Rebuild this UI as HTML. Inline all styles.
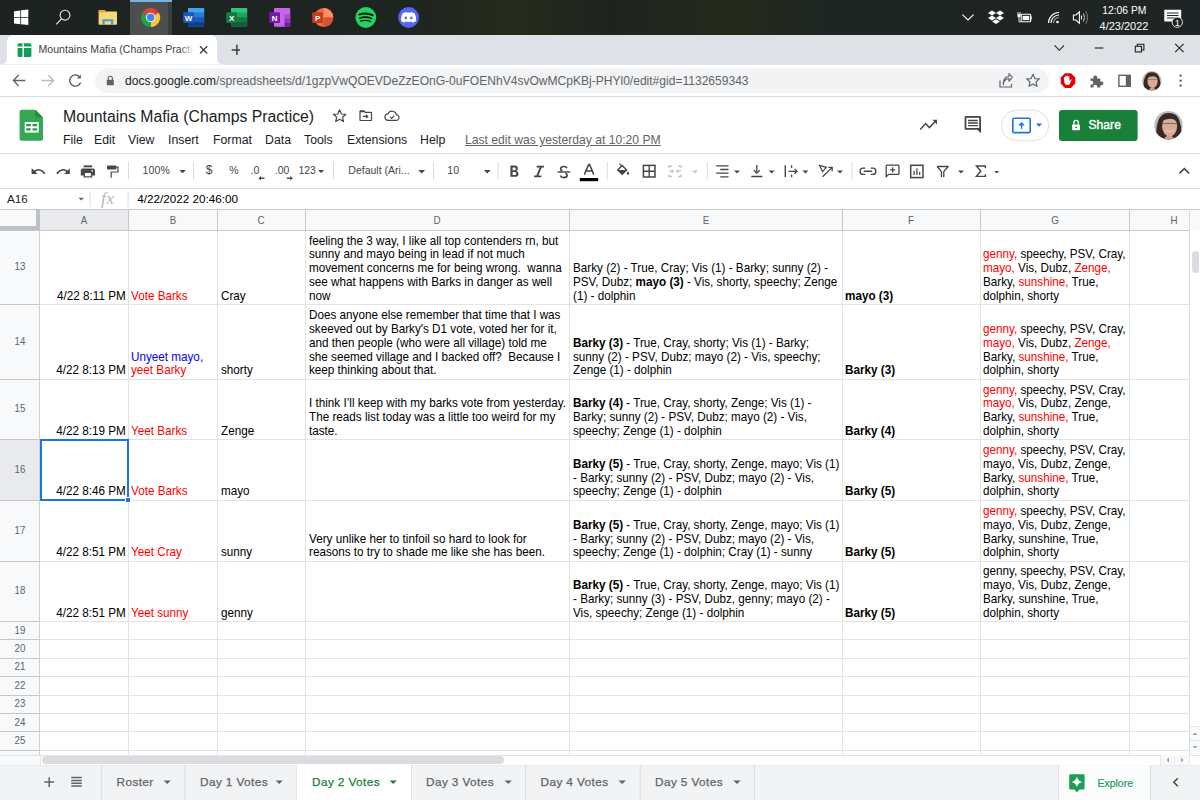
<!DOCTYPE html>
<html><head><meta charset="utf-8">
<style>
*{margin:0;padding:0;box-sizing:border-box}
html,body{width:1200px;height:800px;overflow:hidden;background:#fff;font-family:"Liberation Sans",sans-serif;position:relative}
.a{position:absolute}
.tb{left:0;top:0;width:1200px;height:35px;background:linear-gradient(90deg,#1d2321 0%,#1e2420 33%,#252b1c 43%,#1f231f 51%,#232a1c 61%,#1f2522 69%,#1f2524 100%)}
.tabstrip{left:0;top:35px;width:1200px;height:29.6px;background:#dee1e6}
.addr{left:0;top:64.6px;width:1200px;height:32px;background:#fff}
.omni{background:#f1f3f4}
.line{background:#dadce0}
.t{white-space:nowrap}
.cell{font-size:12.4px;line-height:13.75px;color:#000;white-space:nowrap;transform:scaleX(0.9435);transform-origin:0 50%}
.hdr{background:#f8f9fa}
.gl{background:#e2e3e3}
.hl{background:#c6c6c6}
.rn{font-size:10.8px;line-height:12px;color:#5f6368;text-align:center;width:40px;transform:scaleX(0.9)}
.ch{font-size:10.6px;line-height:12px;color:#5f6368;text-align:center;transform:scaleX(0.92)}
.red{color:#ff0000}
.blue{color:#0000ff}
.tabt{top:776.2px;font-size:11.8px;line-height:13px;color:#5f6368;letter-spacing:0.4px;-webkit-text-stroke:0.25px currentColor}
b{font-weight:bold}
</style></head><body>
<!-- Taskbar -->
<div class="a tb"></div>
<div class="a" style="left:130px;top:0;width:41.5px;height:35px;background:#4b504e"></div>
<div class="a" style="left:168px;top:0;width:3.5px;height:35px;background:#3a3f3d"></div>
<div class="a" style="left:130px;top:0;width:41.5px;height:2px;background:#76b4e3"></div>
<svg class="a" style="left:0;top:0" width="430" height="35" viewBox="0 0 430 35">
  <!-- windows -->
  <g fill="#fff">
    <path d="M14 11.2 L20.3 10.4 V16.9 H14 Z"/>
    <path d="M21.1 10.3 L28.3 9.4 V16.9 H21.1 Z"/>
    <path d="M14 17.7 H20.3 V24.2 L14 23.4 Z"/>
    <path d="M21.1 17.7 H28.3 V25.1 L21.1 24.3 Z"/>
  </g>
  <!-- search -->
  <circle cx="65" cy="15.2" r="4.9" fill="none" stroke="#e8e8e8" stroke-width="1.1"/>
  <path d="M61.5 18.8 L56.3 24.3" stroke="#e8e8e8" stroke-width="1.2"/>
  <!-- folder -->
  <path d="M98.6 11 Q98.6 10 99.6 10 H104.5 L106 11.4 H116.2 Q117 11.4 117 12.2 V24 Q117 24.8 116.2 24.8 H99.4 Q98.6 24.8 98.6 24 Z" fill="#f8d775"/>
  <path d="M98.6 11 Q98.6 10 99.6 10 H104.5 L106 11.4 H106 V12.6 H98.6 Z" fill="#e6a92a"/>
  <path d="M102.4 24.8 V19.2 H113.2 V24.8 H111 V21.3 H104.6 V24.8 Z" fill="#3c9eea"/>
  <!-- chrome -->
  <path d="M150.6 17.4 L142.37 12.65 A9.5 9.5 0 0 1 158.83 12.65 Z" fill="#db4437"/>
  <path d="M150.6 17.4 L158.83 12.65 A9.5 9.5 0 0 1 150.6 26.9 Z" fill="#fcc934"/>
  <path d="M150.6 17.4 L150.6 26.9 A9.5 9.5 0 0 1 142.37 12.65 Z" fill="#1ea446"/>
  <circle cx="150.6" cy="17.4" r="4.7" fill="#fff"/>
  <circle cx="150.6" cy="17.4" r="3.8" fill="#4285f4"/>
  <!-- word -->
  <rect x="188" y="8" width="16.2" height="18.6" rx="1" fill="#2b7cd3"/>
  <rect x="188" y="8" width="16.2" height="4.6" rx="1" fill="#41a5ee"/>
  <rect x="188" y="17.3" width="16.2" height="4.6" fill="#185abd"/>
  <rect x="188" y="21.9" width="16.2" height="4.7" rx="1" fill="#103f91"/>
  <rect x="183.2" y="12.3" width="10.8" height="10.6" rx="1" fill="#185abd"/>
  <text x="188.6" y="20.6" font-family="Liberation Sans" font-weight="bold" font-size="8" fill="#fff" text-anchor="middle">W</text>
  <!-- excel -->
  <rect x="231" y="8" width="16.2" height="18.6" rx="1" fill="#21a366"/>
  <rect x="231" y="8" width="16.2" height="4.6" rx="1" fill="#33c481"/>
  <rect x="231" y="17.3" width="16.2" height="4.6" fill="#107c41"/>
  <rect x="231" y="21.9" width="16.2" height="4.7" rx="1" fill="#185c37"/>
  <rect x="226.2" y="12.3" width="10.8" height="10.6" rx="1" fill="#107c41"/>
  <text x="231.6" y="20.6" font-family="Liberation Sans" font-weight="bold" font-size="8" fill="#fff" text-anchor="middle">X</text>
  <!-- onenote -->
  <rect x="274" y="8" width="16.2" height="18.8" rx="1" fill="#ca64ea"/>
  <rect x="284.5" y="14" width="5.7" height="4.3" fill="#ae4bd5"/>
  <rect x="284.5" y="18.3" width="5.7" height="4.3" fill="#9332bf"/>
  <rect x="284.5" y="22.6" width="5.7" height="4.2" fill="#7719aa"/>
  <rect x="269.2" y="12.3" width="10.8" height="10.6" rx="1" fill="#7719aa"/>
  <text x="274.6" y="20.6" font-family="Liberation Sans" font-weight="bold" font-size="8" fill="#fff" text-anchor="middle">N</text>
  <!-- powerpoint -->
  <circle cx="323.7" cy="17.5" r="9.6" fill="#ed6c47"/>
  <path d="M323.7 7.9 A9.6 9.6 0 0 1 333.3 17.5 H323.7 Z" fill="#ff8f6b"/>
  <path d="M333.3 17.5 A9.6 9.6 0 0 1 323.7 27.1 V17.5 Z" fill="#d35230"/>
  <rect x="312.2" y="12.3" width="10.8" height="10.6" rx="1" fill="#c43e1c"/>
  <text x="317.6" y="20.6" font-family="Liberation Sans" font-weight="bold" font-size="8" fill="#fff" text-anchor="middle">P</text>
  <!-- spotify -->
  <circle cx="365.8" cy="17.5" r="10.4" fill="#1ed760"/>
  <path d="M359.2 14.6 Q366 12.2 372.6 15.2" stroke="#111" stroke-width="1.9" fill="none" stroke-linecap="round"/>
  <path d="M359.9 17.9 Q366 16 371.6 18.5" stroke="#111" stroke-width="1.6" fill="none" stroke-linecap="round"/>
  <path d="M360.6 21 Q365.8 19.6 370.6 21.6" stroke="#111" stroke-width="1.3" fill="none" stroke-linecap="round"/>
  <!-- discord -->
  <circle cx="408.6" cy="17.5" r="10.4" fill="#5865f2"/>
  <path d="M402.6 13.2 Q405 12 406.4 11.9 L406.8 12.7 Q408.6 12.4 410.4 12.7 L410.8 11.9 Q412.2 12 414.6 13.2 Q416.4 16.6 416.1 21 Q414.4 22.3 412.6 22.8 L411.8 21.6 Q412.6 21.3 413.2 20.9 Q408.6 23 404 20.9 Q404.6 21.3 405.4 21.6 L404.6 22.8 Q402.8 22.3 401.1 21 Q400.8 16.6 402.6 13.2 Z" fill="#fff"/>
  <ellipse cx="405.8" cy="18" rx="1.25" ry="1.4" fill="#5865f2"/>
  <ellipse cx="411.4" cy="18" rx="1.25" ry="1.4" fill="#5865f2"/>
</svg>
<svg class="a" style="left:950px;top:0" width="250" height="35" viewBox="950 0 250 35">
  <path d="M962.4 14.6 L968 20 L973.6 14.6" stroke="#fff" stroke-width="1.1" fill="none"/>
  <!-- dropbox -->
  <g fill="#fff">
    <path d="M992 10.5 L996 13 L992 15.5 L988 13 Z"/>
    <path d="M1000 10.5 L1004 13 L1000 15.5 L996 13 Z"/>
    <path d="M992 15.5 L996 18 L992 20.5 L988 18 Z"/>
    <path d="M1000 15.5 L1004 18 L1000 20.5 L996 18 Z"/>
    <path d="M996 19.2 L999.8 21.6 L996 24 L992.2 21.6 Z"/>
  </g>
  <!-- battery plug -->
  <rect x="1021.2" y="14.2" width="9.4" height="7.6" rx="0.8" fill="none" stroke="#fff" stroke-width="1.1"/>
  <rect x="1030.6" y="16.3" width="1" height="3.4" fill="#fff"/>
  <rect x="1022.6" y="15.9" width="6.6" height="4.2" fill="#fff"/>
  <path d="M1017.9 12 V14 M1020.1 12 V14" stroke="#fff" stroke-width="0.9"/>
  <path d="M1017.4 14 H1020.6 V16 A1.6 1.6 0 0 1 1017.4 16 Z" fill="#fff"/>
  <path d="M1019 17.5 V21.8 H1021.2" stroke="#fff" stroke-width="0.9" fill="none"/>
  <!-- wifi -->
  <g fill="none" stroke="#fff" stroke-width="1.1">
    <path d="M1048.5 23 A10.5 10.5 0 0 1 1059 12.5"/>
    <path d="M1051 23 A8 8 0 0 1 1059 15"/>
    <path d="M1053.5 23 A5.5 5.5 0 0 1 1059 17.5" stroke="#aaa"/>
  </g>
  <circle cx="1057.5" cy="22" r="1.3" fill="#fff"/>
  <!-- volume -->
  <path d="M1073.4 15 H1076 L1079.4 11.8 V23.2 L1076 20 H1073.4 Z" fill="none" stroke="#fff" stroke-width="1.1"/>
  <path d="M1081.2 15.6 Q1082.4 17.5 1081.2 19.4" fill="none" stroke="#fff" stroke-width="1.1"/>
  <path d="M1083.4 13.4 Q1085.6 17.5 1083.4 21.6" fill="none" stroke="#ccc" stroke-width="1"/>
  <path d="M1085.8 11.2 Q1089 17.5 1085.8 23.8" fill="none" stroke="#888" stroke-width="1"/>
  <text x="1124.3" y="14" font-family="Liberation Sans" font-size="10.3" fill="#fff" text-anchor="middle">12:06 PM</text>
  <text x="1124" y="30" font-family="Liberation Sans" font-size="11" fill="#fff" text-anchor="middle">4/23/2022</text>
  <!-- notification -->
  <path d="M1164.3 9.8 H1181.2 V21.5 H1176 L1172.8 25 V21.5 H1164.3 Z" fill="#fff"/>
  <path d="M1167 13 H1178.5 M1167 15.5 H1178.5 M1167 18 H1176" stroke="#1f2621" stroke-width="1"/>
  <circle cx="1177.3" cy="22.2" r="5.2" fill="#1f2621" stroke="#ddd" stroke-width="1"/>
  <text x="1177.4" y="25.8" font-family="Liberation Sans" font-size="8.5" fill="#fff" text-anchor="middle">1</text>
</svg>

<!-- Tab strip -->
<div class="a tabstrip"></div>
<svg class="a" style="left:0;top:35px" width="240" height="30" viewBox="0 35 240 30">
  <path d="M0 64.6 Q7 64.6 7 57.6 V43 Q7 35 15 35 H209 Q217 35 217 43 V57.6 Q217 64.6 224 64.6 Z" fill="#fff"/>
  <!-- favicon -->
  <rect x="17.6" y="43.2" width="13.8" height="13.8" rx="1.5" fill="#0f9d58"/>
  <path d="M17.6 47.3 H31.4 M23.2 43.2 V57" stroke="#fff" stroke-width="1.5"/>
  <path d="M203 45.3 L210.2 52.5 M210.2 45.3 L203 52.5" stroke="#3c4043" stroke-width="1.3" transform="translate(-3,1)"/>
  <path d="M236.9 44.8 V55 M231.7 50 H242.1" stroke="#3c4043" stroke-width="1.5"/>
</svg>
<div class="a t" style="left:38.5px;top:42.5px;width:155px;overflow:hidden;font-size:10.5px;color:#3c4043;line-height:13px;letter-spacing:0.05px">Mountains Mafia (Champs Practice)</div>
<div class="a" style="left:181px;top:40px;width:14px;height:18px;background:linear-gradient(90deg,rgba(255,255,255,0),#fff 90%)"></div>
<svg class="a" style="left:1040px;top:35px" width="160" height="30" viewBox="1040 35 160 30">
  <path d="M1054.6 45.4 L1059.3 50.3 L1064 45.4" stroke="#202124" stroke-width="1.1" fill="none"/>
  <path d="M1094.8 48 H1103.4" stroke="#202124" stroke-width="1.1"/>
  <rect x="1135.3" y="46.3" width="6.2" height="5.6" fill="none" stroke="#202124" stroke-width="1.1"/>
  <path d="M1137.3 46.3 V44.2 H1143.9 V50 H1141.5" fill="none" stroke="#202124" stroke-width="1.1"/>
  <path d="M1175.2 43.8 L1183.6 52.2 M1183.6 43.8 L1175.2 52.2" stroke="#202124" stroke-width="1.1"/>
</svg>
<!-- Address bar -->
<div class="a addr"></div>
<div class="a omni" style="left:95px;top:68px;width:954px;height:24.7px;border-radius:12.4px"></div>
<svg class="a" style="left:0;top:64px" width="1200" height="32" viewBox="0 64 1200 32">
  <path d="M13.4 80.5 H25.3 M18.7 75 L13.4 80.5 L18.7 86" stroke="#5f6368" stroke-width="1.3" fill="none"/>
  <path d="M41.5 80.5 H53.6 M48.3 75 L53.6 80.5 L48.3 86" stroke="#b8babd" stroke-width="1.3" fill="none"/>
  <path d="M79.9 77.3 A5.6 5.6 0 1 0 80.6 82.4" stroke="#5f6368" stroke-width="1.4" fill="none"/>
  <path d="M80.9 74.6 V78.6 H76.9 Z" fill="#5f6368"/>
  <!-- lock -->
  <rect x="106.8" y="79.8" width="7" height="5.5" rx="0.6" fill="#5f6368"/>
  <path d="M108.2 80 V78.3 A2.1 2.1 0 0 1 112.4 78.3 V80" stroke="#5f6368" stroke-width="1.1" fill="none"/>
  <!-- share -->
  <path d="M1000 80.5 V87 H1011.5 V84" stroke="#5f6368" stroke-width="1.2" fill="none"/>
  <path d="M1003.2 84.6 Q1004 78.6 1009 78.6 V81.3 L1012.3 77.3 L1009 73.5 V76.2 Q1003.3 76.6 1003.2 84.6 Z" stroke="#5f6368" stroke-width="1.1" fill="none" stroke-linejoin="round"/>
  <!-- star -->
  <path d="M1033 74.3 L1034.9 78.6 L1039.4 78.9 L1036 81.9 L1037 86.3 L1033 83.9 L1029 86.3 L1030 81.9 L1026.6 78.9 L1031.1 78.6 Z" stroke="#5f6368" stroke-width="1.2" fill="none" stroke-linejoin="round"/>
  <!-- red hand -->
  <path d="M1065 73.3 H1071 L1075.3 77.6 V83.6 L1071 87.9 H1065 L1060.7 83.6 V77.6 Z" fill="#e60000"/>
  <path d="M1065.2 84.6 Q1064 82 1064 80.2 V77.3 Q1064.5 76.4 1065.2 77.3 V80 V76.3 Q1065.9 75.5 1066.6 76.3 V79.6 V75.9 Q1067.3 75.1 1068 75.9 V79.6 V76.6 Q1068.7 75.9 1069.4 76.6 V81 L1070.6 79.4 Q1071.6 79 1071.6 79.8 L1070 83.6 Q1069.4 84.9 1068.2 84.9 Z" fill="#fff"/>
  <!-- puzzle -->
  <path d="M1090.5 78.5 H1093.4 V77.3 A1.9 1.9 0 1 1 1097.2 77.3 V78.5 H1100.3 V81.4 H1101.5 A1.9 1.9 0 1 1 1101.5 85.2 H1100.3 V87.6 H1097.2 V86.6 A1.9 1.9 0 1 0 1093.4 86.6 V87.6 H1090.5 V84.6 H1091.4 A1.9 1.9 0 1 0 1091.4 80.8 H1090.5 Z" fill="#5f6368"/>
  <!-- sidebar -->
  <rect x="1118.9" y="75.3" width="11.4" height="11" fill="none" stroke="#5f6368" stroke-width="1.4"/>
  <rect x="1125.8" y="75.3" width="4.5" height="11" fill="#5f6368"/>
  <!-- kebab -->
  <circle cx="1180.6" cy="75.6" r="1.2" fill="#5f6368"/>
  <circle cx="1180.6" cy="80.6" r="1.2" fill="#5f6368"/>
  <circle cx="1180.6" cy="85.6" r="1.2" fill="#5f6368"/>
</svg>
<!-- avatar small -->
<svg class="a" style="left:1142.3px;top:71px" width="19.6" height="19.6" viewBox="0 0 28.6 28.6">
  <defs><clipPath id="avc2"><circle cx="14.3" cy="14.3" r="14.2"/></clipPath></defs>
  <g clip-path="url(#avc2)">
    <rect x="0" y="0" width="29" height="29" fill="#b4bfca"/>
    <path d="M3 29 Q1 18 4 10 Q7 2 14 2 Q22 1.5 25 9 Q28 17 27 29 Z" fill="#3b281e"/>
    <ellipse cx="15.4" cy="15" rx="7.4" ry="10" fill="#d8ab98"/>
    <path d="M8 9.5 Q11 4 16.5 4.6 Q21.5 5.6 22.6 11 Q20 7.4 15.5 7.6 Q11 8 8 9.5 Z" fill="#3b281e"/>
    <path d="M8.4 12.4 H22.4" stroke="#7a6a62" stroke-width="1"/>
    <path d="M10 29 Q11 24 15 24.5 Q19 24 20 29 Z" fill="#caa28c"/>
  </g>
</svg>
<div class="a t" style="left:125px;top:73.5px;font-size:12.05px;line-height:14px;color:#5f6368"><span style="color:#202124">docs.google.com</span>/spreadsheets/d/1gzpVwQOEVDeZzEOnG-0uFOENhV4svOwMCpKBj-PHYl0/edit#gid=1132659343</div>
<div class="a line" style="left:0;top:96px;width:1200px;height:1px"></div>

<!-- Sheets header -->
<svg class="a" style="left:0;top:97px" width="1200" height="57" viewBox="0 97 1200 57">
  <!-- logo -->
  <path d="M21.8 109.8 H35.3 L43 117.5 V138.6 Q43 140.8 40.8 140.8 H21.8 Q19.6 140.8 19.6 138.6 V112 Q19.6 109.8 21.8 109.8 Z" fill="#34a853"/>
  <path d="M35.3 109.8 L43 117.5 H37.3 Q35.3 117.5 35.3 115.5 Z" fill="#1e8e3e"/>
  <rect x="24.7" y="122" width="14" height="10.6" fill="#fff"/>
  <rect x="26.2" y="124" width="4.6" height="2.3" rx="0.5" fill="#1e9e4a"/>
  <rect x="32.5" y="124" width="4.6" height="2.3" rx="0.5" fill="#1e9e4a"/>
  <rect x="26.2" y="128.2" width="4.6" height="2.3" rx="0.5" fill="#1e9e4a"/>
  <rect x="32.5" y="128.2" width="4.6" height="2.3" rx="0.5" fill="#1e9e4a"/>
  <!-- star -->
  <path d="M339.6 109.8 L341.4 114 L345.9 114.3 L342.5 117.2 L343.5 121.6 L339.6 119.3 L335.7 121.6 L336.7 117.2 L333.3 114.3 L337.8 114 Z" stroke="#444746" stroke-width="1.2" fill="none" stroke-linejoin="round"/>
  <!-- move -->
  <path d="M360 111.2 Q360 110.8 360.4 110.8 H364 L365.4 112.3 H370.9 Q371.5 112.3 371.5 112.9 V119.9 Q371.5 120.5 370.9 120.5 H360.6 Q360 120.5 360 119.9 Z" stroke="#444746" stroke-width="1.2" fill="none"/>
  <path d="M360 110.8 H364 L365.4 112.3 H360 Z" fill="#444746"/>
  <path d="M362.8 116.4 H366.6" stroke="#444746" stroke-width="1.3"/>
  <path d="M365.9 114.1 L368.6 116.4 L365.9 118.7 Z" fill="#444746"/>
  <!-- cloud -->
  <path d="M388.4 120.3 H396.2 A2.7 2.7 0 0 0 396.5 114.9 A4.5 4.5 0 0 0 388 113.8 A3.25 3.25 0 0 0 388.4 120.3 Z" stroke="#444746" stroke-width="1.2" fill="none"/>
  <path d="M390 116.9 L391.6 118.4 L394.3 115.7" stroke="#444746" stroke-width="1.2" fill="none"/>
  <!-- trend -->
  <path d="M920.2 129.5 L925.6 123.6 L929.4 127.6 L935 121.8" stroke="#444746" stroke-width="1.5" fill="none"/>
  <path d="M932.4 119.8 H937 V124.4 Z" fill="#444746"/>
  <!-- comment -->
  <path d="M964.6 117.2 Q964.6 116 965.8 116 H979.8 Q981 116 981 117.2 V133.2 L977.4 129.8 H965.8 Q964.6 129.8 964.6 128.6 Z" fill="#444746"/>
  <path d="M966.4 117.8 H979.2 V128 H966.4 Z" fill="#fff"/>
  <path d="M968 120.5 H977.8 M968 123 H977.8 M968 125.6 H977.8" stroke="#444746" stroke-width="1.3"/>
  <!-- present pill -->
  <rect x="1001.5" y="110.2" width="47.2" height="30.6" rx="15.3" fill="#fff" stroke="#dadce0" stroke-width="0.9"/>
  <rect x="1012.8" y="118.2" width="17.4" height="14.4" rx="1.2" fill="none" stroke="#1a73e8" stroke-width="1.6"/>
  <path d="M1021.5 128.9 V123.5" stroke="#1a73e8" stroke-width="1.4"/>
  <path d="M1018.1 125.6 L1021.5 122 L1024.9 125.6 Z" fill="#1a73e8"/>
  <path d="M1036 123.6 H1042.2 L1039.1 126.8 Z" fill="#1a73e8"/>
  <!-- share -->
  <rect x="1059" y="110" width="78.6" height="31" rx="3" fill="#188038"/>
  <rect x="1072.2" y="124.6" width="7.8" height="5.6" rx="0.6" fill="#fff"/>
  <path d="M1073.9 124.8 V122.6 A2.2 2.2 0 0 1 1078.3 122.6 V124.8" stroke="#fff" stroke-width="1.3" fill="none"/>
  <circle cx="1076.1" cy="127.3" r="0.9" fill="#188038"/>
</svg>
<div class="a t" style="left:63px;top:108px;font-size:15.8px;line-height:18px;color:#202124">Mountains Mafia (Champs Practice)</div>
<div class="a t" style="left:1088.4px;top:117.5px;font-size:12px;line-height:14px;color:#fff;letter-spacing:0.1px;-webkit-text-stroke:0.4px #fff">Share</div>
<!-- big avatar -->
<svg class="a" style="left:1154px;top:111px" width="29" height="29" viewBox="0 0 28.6 28.6">
  <defs><clipPath id="avc"><circle cx="14.3" cy="14.1" r="14"/></clipPath></defs>
  <g clip-path="url(#avc)">
    <rect x="0" y="0" width="29" height="29" fill="#b4bfca"/>
    <path d="M3 29 Q1 18 4 10 Q7 2 14 2 Q22 1.5 25 9 Q28 17 27 29 Z" fill="#3b281e"/>
    <ellipse cx="15.4" cy="15" rx="7.4" ry="10" fill="#d8ab98"/>
    <path d="M8 9.5 Q11 4 16.5 4.6 Q21.5 5.6 22.6 11 Q20 7.4 15.5 7.6 Q11 8 8 9.5 Z" fill="#3b281e"/>
    <path d="M8.4 12.4 H22.4" stroke="#7a6a62" stroke-width="1"/>
    <path d="M11.5 19 Q15.5 21.5 19.5 19" stroke="#ead2c8" stroke-width="1" fill="none"/>
    <path d="M10 29 Q11 24 15 24.5 Q19 24 20 29 Z" fill="#caa28c"/>
  </g>
</svg>
<!-- menu -->
<div class="a t" style="left:63px;top:133px;font-size:12.3px;line-height:14px;color:#202124">
  <span class="a" style="left:0">File</span><span class="a" style="left:31px">Edit</span><span class="a" style="left:65px">View</span><span class="a" style="left:105px">Insert</span><span class="a" style="left:150px">Format</span><span class="a" style="left:202px">Data</span><span class="a" style="left:241px">Tools</span><span class="a" style="left:284px">Extensions</span><span class="a" style="left:357px">Help</span>
  <span class="a" style="left:402px;color:#5f6368;text-decoration:underline;font-size:12.15px">Last edit was yesterday at 10:20 PM</span>
</div>
<div class="a line" style="left:0;top:153.2px;width:1200px;height:1px"></div>

<!-- Toolbar -->
<svg class="a" style="left:0;top:154px" width="1200" height="34" viewBox="0 154 1200 34">
  <g fill="#444746">
  <!-- undo -->
  <path d="M31.7 168.4 L35.6 172.3 L31.7 174 Z"/>
  </g>
  <path d="M33 172.6 Q39 166.4 44.8 173.6" stroke="#444746" stroke-width="1.7" fill="none"/>
  <path d="M31.8 168.3 V174 H37.4 Z" fill="#444746"/>
  <path d="M69.8 168.3 V174 H64.2 Z" fill="#444746"/>
  <path d="M68.6 172.6 Q62.6 166.4 56.8 173.6" stroke="#444746" stroke-width="1.7" fill="none"/>
  <!-- print -->
  <rect x="83.6" y="165.4" width="8.6" height="1.9" fill="#444746"/>
  <path d="M80.8 170.3 Q80.8 168.6 82.5 168.6 H93.3 Q95 168.6 95 170.3 V175.5 H92.2 V177.6 H83.6 V175.5 H80.8 Z" fill="#444746"/>
  <rect x="84.9" y="173" width="6" height="3.3" fill="#fff"/>
  <circle cx="92.2" cy="170.9" r="0.8" fill="#fff"/>
  <!-- paint format -->
  <rect x="107" y="165.5" width="9.4" height="4" rx="0.8" fill="#444746"/>
  <path d="M116.3 167.2 H118 V172 H111.2 V177.8" stroke="#444746" stroke-width="1.2" fill="none"/>
  <!-- seps -->
  <g fill="#dadce0">
    <rect x="128" y="162" width="1" height="17.5"/>
    <rect x="193" y="162" width="1" height="17.5"/>
    <rect x="333" y="162" width="1" height="17.5"/>
    <rect x="433" y="162" width="1" height="17.5"/>
    <rect x="497.6" y="162" width="1" height="17.5"/>
    <rect x="606.8" y="162" width="1" height="17.5"/>
    <rect x="706.8" y="162" width="1" height="17.5"/>
    <rect x="851.6" y="162" width="1" height="17.5"/>
  </g>
  <!-- dropdown arrows -->
  <g fill="#444746">
    <path d="M179.3 170 H185.9 L182.6 173.3 Z"/>
    <path d="M318 170 H324.2 L321.1 173.1 Z"/>
    <path d="M418.2 170 H425.2 L421.7 173.5 Z"/>
    <path d="M483.9 170 H490.7 L487.3 173.4 Z"/>
    <path d="M734 170.6 H740 L737 173.6 Z"/>
    <path d="M768.6 170.6 H774.6 L771.6 173.6 Z"/>
    <path d="M802.4 170.6 H808.4 L805.4 173.6 Z"/>
    <path d="M837 170.6 H843 L840 173.6 Z"/>
    <path d="M958 170.6 H964 L961 173.6 Z"/>
    <path d="M994.2 171 H999.2 L996.7 173.5 Z"/>
  </g>
  <path d="M692 170.6 H698 L695 173.6 Z" fill="#c4c7c5"/>
  <!-- decimal arrows -->
  <path d="M264.5 178.2 H260" stroke="#444746" stroke-width="1.4"/><path d="M258.4 178.2 L261 175.9 V180.5 Z" fill="#444746"/>
  <path d="M286.8 178.2 H291.3" stroke="#444746" stroke-width="1.4"/><path d="M292.9 178.2 L290.3 175.9 V180.5 Z" fill="#444746"/>
  <!-- B I S A -->
  <path d="M510.4 165.6 H514.6 Q517.9 165.6 517.9 168.5 Q517.9 170.3 516.3 170.9 Q518.5 171.5 518.5 173.7 Q518.5 176.8 515 176.8 H510.4 Z M512.6 167.4 V170.2 H514.5 Q515.8 170.2 515.8 168.8 Q515.8 167.4 514.5 167.4 Z M512.6 171.9 V175 H514.8 Q516.3 175 516.3 173.45 Q516.3 171.9 514.8 171.9 Z" fill="#444746"/>
  <path d="M536.6 166.6 H544 M534 176.4 H541.4 M541 166.6 L537 176.4" stroke="#444746" stroke-width="1.9" fill="none"/>
  <path d="M557.5 172 H570.3" stroke="#444746" stroke-width="1.4"/>
  <path d="M567 168.1 Q566.2 166.5 564 166.5 Q560.6 166.5 560.7 169.1 Q560.8 170.5 562.4 171.1 M565.4 173.2 Q567.2 174 567.1 175.4 Q567 177.6 563.8 177.6 Q561.2 177.6 560.3 175.5" stroke="#444746" stroke-width="1.7" fill="none"/>
  <path d="M584.4 174.6 L588.6 164.6 H589.6 L593.8 174.6 M586 171 H592.2" stroke="#444746" stroke-width="1.5" fill="none"/>
  <rect x="579.8" y="178" width="18.4" height="3.2" fill="#000"/>
  <!-- fill -->
  <path d="M617.7 169.9 L622.2 165.4 L626.6 169.9 L622.2 174.3 Z" fill="none" stroke="#444746" stroke-width="1.4"/>
  <path d="M617.7 169.9 H626.6 L622.2 174.3 Z" fill="#444746"/>
  <path d="M619.4 163.6 L622.4 166.6" stroke="#444746" stroke-width="1.3"/>
  <path d="M628 171.3 Q626.8 173 626.8 173.6 A1.2 1.2 0 0 0 629.2 173.6 Q629.2 173 628 171.3 Z" fill="#444746"/>
  <!-- borders -->
  <rect x="643.4" y="165.4" width="11.6" height="11.6" fill="none" stroke="#444746" stroke-width="1.5"/>
  <path d="M649.2 165.4 V177 M643.4 171.2 H655" stroke="#444746" stroke-width="1.4"/>
  <!-- merge (disabled) -->
  <g stroke="#c4c7c5" stroke-width="1.3" fill="none">
    <path d="M669 168 V166 H672 M678 166 H681 V168 M669 174.5 V176.5 H672 M678 176.5 H681 V174.5"/>
    <path d="M669 171.2 H673.3 M671.6 169.6 L673.3 171.2 L671.6 172.8 M681 171.2 H676.7 M678.4 169.6 L676.7 171.2 L678.4 172.8"/>
  </g>
  <!-- halign -->
  <path d="M716.2 165.8 H728.5 M720.3 169.5 H728.5 M716.2 173.2 H728.5 M720.3 176.8 H728.5" stroke="#444746" stroke-width="1.3"/>
  <!-- valign -->
  <path d="M751.3 176.5 H762.4 M756.8 165 V173" stroke="#444746" stroke-width="1.3"/>
  <path d="M753.9 170.3 L756.8 173.2 L759.7 170.3" stroke="#444746" stroke-width="1.3" fill="none"/>
  <!-- wrap -->
  <path d="M785.3 165.3 V177.2" stroke="#444746" stroke-width="1.4"/>
  <path d="M791.6 165.3 V168 M791.6 174.4 V177.2" stroke="#444746" stroke-width="1.3"/>
  <path d="M788.4 171.3 H797 M794.6 168.9 L797 171.3 L794.6 173.7" stroke="#444746" stroke-width="1.3" fill="none"/>
  <!-- rotate -->
  <path d="M819.6 165.4 L826.3 167.4 L822.5 171.6 Z" stroke="#444746" stroke-width="1.2" fill="none"/>
  <path d="M822.6 176.8 L832 167.6 M828.4 167.4 H832.2 V171.2" stroke="#444746" stroke-width="1.3" fill="none"/>
  <!-- link -->
  <path d="M865.3 168.1 H862.9 Q860.1 168.1 860.1 171.2 Q860.1 174.4 862.9 174.4 H865.3 M870.6 168.1 H873 Q875.8 168.1 875.8 171.2 Q875.8 174.4 873 174.4 H870.6 M863.8 171.2 H872.1" stroke="#444746" stroke-width="1.4" fill="none"/>
  <!-- comment add -->
  <path d="M886.2 176.9 V166.2 Q886.2 165.2 887.2 165.2 H898 Q899 165.2 899 166.2 V173.4 Q899 174.4 898 174.4 H888.6 Z" stroke="#444746" stroke-width="1.3" fill="none" stroke-linejoin="round"/>
  <path d="M892.6 167.2 V172.4 M890 169.8 H895.2" stroke="#444746" stroke-width="1.3"/>
  <!-- chart -->
  <rect x="910.7" y="165.3" width="12.3" height="12.3" fill="none" stroke="#444746" stroke-width="1.5"/>
  <path d="M914.1 170.7 V175 M916.9 168.3 V175 M919.7 172 V175" stroke="#444746" stroke-width="1.2"/>
  <!-- filter -->
  <path d="M937.1 166.5 H948.2 L943.8 171.7 V177 M941.5 177 V171.7 L937.1 166.5" stroke="#444746" stroke-width="1.3" fill="none" stroke-linejoin="round"/>
  <!-- sigma -->
  <path d="M985.4 168.2 V166 H976.4 L980.8 171.2 L976.4 176.4 H985.4 V174.2" stroke="#444746" stroke-width="1.4" fill="none"/>
  <!-- caret -->
  <path d="M1179.4 173.4 L1184.3 168.6 L1189.2 173.4" stroke="#444746" stroke-width="1.5" fill="none"/>
</svg>
<div class="a t" style="left:142.4px;top:164.2px;font-size:10.5px;line-height:12px;color:#444746;letter-spacing:0.2px">100%</div>
<div class="a t" style="left:205.8px;top:164px;font-size:12px;line-height:12px;color:#444746">$</div>
<div class="a t" style="left:229.3px;top:164.2px;font-size:10.5px;line-height:12px;color:#444746">%</div>
<div class="a t" style="left:250.6px;top:164.2px;font-size:10.5px;line-height:12px;color:#444746">.0</div>
<div class="a t" style="left:274.8px;top:164.2px;font-size:10.5px;line-height:12px;color:#444746">.00</div>
<div class="a t" style="left:298.4px;top:164.2px;font-size:10.5px;line-height:12px;color:#444746">123</div>
<div class="a t" style="left:348.3px;top:164.2px;font-size:10.5px;line-height:12px;color:#444746">Default (Ari...</div>
<div class="a t" style="left:447.3px;top:164.2px;font-size:10.5px;line-height:12px;color:#444746">10</div>
<div class="a line" style="left:0;top:187.7px;width:1200px;height:1px"></div>

<!-- Formula bar -->
<div class="a t" style="left:7px;top:191.6px;font-size:11.7px;line-height:13px;color:#202124">A16</div>
<svg class="a" style="left:0;top:188px" width="400" height="21" viewBox="0 188 400 21">
  <path d="M78.4 197.8 H84 L81.2 200.6 Z" fill="#5f6368"/>
  <rect x="89.6" y="191" width="1" height="16" fill="#dadce0"/>
  <rect x="127.6" y="191" width="1" height="16" fill="#dadce0"/>
</svg>
<div class="a t" style="left:101px;top:187.5px;font-size:17.5px;line-height:20px;color:#b4b8bc;font-family:'Liberation Serif',serif;font-style:italic;letter-spacing:0.3px">fx</div>
<div class="a t" style="left:137.3px;top:191.6px;font-size:11.7px;line-height:13px;color:#000">4/22/2022 20:46:00</div>

<div class="a hdr" style="left:0;top:209px;width:1200px;height:21px"></div>
<div class="a" style="left:40px;top:209px;width:88.5px;height:21px;background:#e8eaed"></div>
<div class="a hdr" style="left:0;top:230px;width:40px;height:525px"></div>
<div class="a" style="left:0;top:439.5px;width:40px;height:60.5px;background:#e8eaed"></div>
<div class="a gl" style="left:128px;top:230px;width:1px;height:525px"></div>
<div class="a hl" style="left:128px;top:209px;width:1px;height:21px"></div>
<div class="a gl" style="left:216.5px;top:230px;width:1px;height:525px"></div>
<div class="a hl" style="left:216.5px;top:209px;width:1px;height:21px"></div>
<div class="a gl" style="left:304.5px;top:230px;width:1px;height:525px"></div>
<div class="a hl" style="left:304.5px;top:209px;width:1px;height:21px"></div>
<div class="a gl" style="left:569px;top:230px;width:1px;height:525px"></div>
<div class="a hl" style="left:569px;top:209px;width:1px;height:21px"></div>
<div class="a gl" style="left:842px;top:230px;width:1px;height:525px"></div>
<div class="a hl" style="left:842px;top:209px;width:1px;height:21px"></div>
<div class="a gl" style="left:979.5px;top:230px;width:1px;height:525px"></div>
<div class="a hl" style="left:979.5px;top:209px;width:1px;height:21px"></div>
<div class="a gl" style="left:1129.2px;top:230px;width:1px;height:525px"></div>
<div class="a hl" style="left:1129.2px;top:209px;width:1px;height:21px"></div>
<div class="a gl" style="left:40px;top:303.9px;width:1149.6px;height:1px"></div>
<div class="a hl" style="left:0;top:303.9px;width:40px;height:1px"></div>
<div class="a gl" style="left:40px;top:378.5px;width:1149.6px;height:1px"></div>
<div class="a hl" style="left:0;top:378.5px;width:40px;height:1px"></div>
<div class="a gl" style="left:40px;top:439px;width:1149.6px;height:1px"></div>
<div class="a hl" style="left:0;top:439px;width:40px;height:1px"></div>
<div class="a gl" style="left:40px;top:499.5px;width:1149.6px;height:1px"></div>
<div class="a hl" style="left:0;top:499.5px;width:40px;height:1px"></div>
<div class="a gl" style="left:40px;top:560.5px;width:1149.6px;height:1px"></div>
<div class="a hl" style="left:0;top:560.5px;width:40px;height:1px"></div>
<div class="a gl" style="left:40px;top:620.9px;width:1149.6px;height:1px"></div>
<div class="a hl" style="left:0;top:620.9px;width:40px;height:1px"></div>
<div class="a gl" style="left:40px;top:639.3px;width:1149.6px;height:1px"></div>
<div class="a hl" style="left:0;top:639.3px;width:40px;height:1px"></div>
<div class="a gl" style="left:40px;top:657.7px;width:1149.6px;height:1px"></div>
<div class="a hl" style="left:0;top:657.7px;width:40px;height:1px"></div>
<div class="a gl" style="left:40px;top:676.1px;width:1149.6px;height:1px"></div>
<div class="a hl" style="left:0;top:676.1px;width:40px;height:1px"></div>
<div class="a gl" style="left:40px;top:694.5px;width:1149.6px;height:1px"></div>
<div class="a hl" style="left:0;top:694.5px;width:40px;height:1px"></div>
<div class="a gl" style="left:40px;top:712.9px;width:1149.6px;height:1px"></div>
<div class="a hl" style="left:0;top:712.9px;width:40px;height:1px"></div>
<div class="a gl" style="left:40px;top:731.3px;width:1149.6px;height:1px"></div>
<div class="a hl" style="left:0;top:731.3px;width:40px;height:1px"></div>
<div class="a gl" style="left:40px;top:749.7px;width:1149.6px;height:1px"></div>
<div class="a hl" style="left:0;top:749.7px;width:40px;height:1px"></div>
<div class="a hl" style="left:0;top:208.5px;width:1200px;height:1px"></div>
<div class="a hl" style="left:0;top:229.5px;width:1200px;height:1px"></div>
<div class="a" style="left:39.2px;top:209px;width:1.2px;height:546px;background:#cfd0d1"></div>
<div class="a hl" style="left:1189.1px;top:209px;width:1px;height:546px"></div>
<div class="a" style="left:36.3px;top:209px;width:3.7px;height:21px;background:#bdc1c6"></div>
<div class="a" style="left:0;top:226.3px;width:40px;height:3.7px;background:#bdc1c6"></div>
<div class="a ch" style="left:64.25px;top:213.5px;width:40px">A</div>
<div class="a ch" style="left:152.75px;top:213.5px;width:40px">B</div>
<div class="a ch" style="left:241px;top:213.5px;width:40px">C</div>
<div class="a ch" style="left:417.25px;top:213.5px;width:40px">D</div>
<div class="a ch" style="left:686px;top:213.5px;width:40px">E</div>
<div class="a ch" style="left:891.25px;top:213.5px;width:40px">F</div>
<div class="a ch" style="left:1034.85px;top:213.5px;width:40px">G</div>
<div class="a ch" style="left:1154px;top:213.5px;width:40px">H</div>
<div class="a rn" style="left:0;top:260.2px">13</div>
<div class="a rn" style="left:0;top:334.7px">14</div>
<div class="a rn" style="left:0;top:402.25px">15</div>
<div class="a rn" style="left:0;top:462.75px">16</div>
<div class="a rn" style="left:0;top:523.5px">17</div>
<div class="a rn" style="left:0;top:584.2px">18</div>
<div class="a rn" style="left:0;top:623.6px">19</div>
<div class="a rn" style="left:0;top:642px">20</div>
<div class="a rn" style="left:0;top:660.4px">21</div>
<div class="a rn" style="left:0;top:678.8px">22</div>
<div class="a rn" style="left:0;top:697.2px">23</div>
<div class="a rn" style="left:0;top:715.6px">24</div>
<div class="a rn" style="left:0;top:734px">25</div>
<div class="a cell" style="right:1074px;bottom:496.55px;transform-origin:100% 50%">4/22 8:11 PM</div>
<div class="a cell" style="left:130.8px;bottom:496.55px"><span class="red">Vote Barks</span></div>
<div class="a cell" style="left:220.5px;bottom:496.55px">Cray</div>
<div class="a cell" style="left:309px;bottom:496.55px">feeling the 3 way, I like all top contenders rn, but<br>sunny and mayo being in lead if not much<br>movement concerns me for being wrong.&nbsp; wanna<br>see what happens with Barks in danger as well<br>now</div>
<div class="a cell" style="left:572.5px;bottom:496.55px">Barky (2) - True, Cray; Vis (1) - Barky; sunny (2) -<br>PSV, Dubz; <b>mayo (3)</b> - Vis, shorty, speechy; Zenge<br>(1) - dolphin</div>
<div class="a cell" style="left:845.3px;bottom:496.55px"><b>mayo (3)</b></div>
<div class="a cell" style="left:983.3px;bottom:496.55px"><span class="red">genny,</span> speechy, PSV, Cray,<br><span class="red">mayo,</span> Vis, Dubz, <span class="red">Zenge,</span><br>Barky, <span class="red">sunshine,</span> True,<br>dolphin, shorty</div>
<div class="a cell" style="right:1074px;bottom:421.95px;transform-origin:100% 50%">4/22 8:13 PM</div>
<div class="a cell" style="left:130.8px;bottom:421.95px"><span class="blue">Unyeet mayo,</span><br><span class="red">yeet Barky</span></div>
<div class="a cell" style="left:220.5px;bottom:421.95px">shorty</div>
<div class="a cell" style="left:309px;bottom:421.95px">Does anyone else remember that time that I was<br>skeeved out by Barky's D1 vote, voted her for it,<br>and then people (who were all village) told me<br>she seemed village and I backed off?&nbsp; Because I<br>keep thinking about that.</div>
<div class="a cell" style="left:572.5px;bottom:421.95px"><b>Barky (3)</b> - True, Cray, shorty; Vis (1) - Barky;<br>sunny (2) - PSV, Dubz; mayo (2) - Vis, speechy;<br>Zenge (1) - dolphin</div>
<div class="a cell" style="left:845.3px;bottom:421.95px"><b>Barky (3)</b></div>
<div class="a cell" style="left:983.3px;bottom:421.95px"><span class="red">genny,</span> speechy, PSV, Cray,<br><span class="red">mayo,</span> Vis, Dubz, <span class="red">Zenge,</span><br>Barky, <span class="red">sunshine,</span> True,<br>dolphin, shorty</div>
<div class="a cell" style="right:1074px;bottom:361.45px;transform-origin:100% 50%">4/22 8:19 PM</div>
<div class="a cell" style="left:130.8px;bottom:361.45px"><span class="red">Yeet Barks</span></div>
<div class="a cell" style="left:220.5px;bottom:361.45px">Zenge</div>
<div class="a cell" style="left:309px;bottom:361.45px">I think I’ll keep with my barks vote from yesterday.<br>The reads list today was a little too weird for my<br>taste.</div>
<div class="a cell" style="left:572.5px;bottom:361.45px"><b>Barky (4)</b> - True, Cray, shorty, Zenge; Vis (1) -<br>Barky; sunny (2) - PSV, Dubz; mayo (2) - Vis,<br>speechy; Zenge (1) - dolphin</div>
<div class="a cell" style="left:845.3px;bottom:361.45px"><b>Barky (4)</b></div>
<div class="a cell" style="left:983.3px;bottom:361.45px"><span class="red">genny,</span> speechy, PSV, Cray,<br><span class="red">mayo,</span> Vis, Dubz, Zenge,<br>Barky, <span class="red">sunshine,</span> True,<br>dolphin, shorty</div>
<div class="a cell" style="right:1074px;bottom:300.95px;transform-origin:100% 50%">4/22 8:46 PM</div>
<div class="a cell" style="left:130.8px;bottom:300.95px"><span class="red">Vote Barks</span></div>
<div class="a cell" style="left:220.5px;bottom:300.95px">mayo</div>
<div class="a cell" style="left:572.5px;bottom:300.95px"><b>Barky (5)</b> - True, Cray, shorty, Zenge, mayo; Vis (1)<br>- Barky; sunny (2) - PSV, Dubz; mayo (2) - Vis,<br>speechy; Zenge (1) - dolphin</div>
<div class="a cell" style="left:845.3px;bottom:300.95px"><b>Barky (5)</b></div>
<div class="a cell" style="left:983.3px;bottom:300.95px"><span class="red">genny,</span> speechy, PSV, Cray,<br>mayo, Vis, Dubz, Zenge,<br>Barky, <span class="red">sunshine,</span> True,<br>dolphin, shorty</div>
<div class="a cell" style="right:1074px;bottom:239.95px;transform-origin:100% 50%">4/22 8:51 PM</div>
<div class="a cell" style="left:130.8px;bottom:239.95px"><span class="red">Yeet Cray</span></div>
<div class="a cell" style="left:220.5px;bottom:239.95px">sunny</div>
<div class="a cell" style="left:309px;bottom:239.95px">Very unlike her to tinfoil so hard to look for<br>reasons to try to shade me like she has been.</div>
<div class="a cell" style="left:572.5px;bottom:239.95px"><b>Barky (5)</b> - True, Cray, shorty, Zenge, mayo; Vis (1)<br>- Barky; sunny (2) - PSV, Dubz; mayo (2) - Vis,<br>speechy; Zenge (1) - dolphin; Cray (1) - sunny</div>
<div class="a cell" style="left:845.3px;bottom:239.95px"><b>Barky (5)</b></div>
<div class="a cell" style="left:983.3px;bottom:239.95px"><span class="red">genny,</span> speechy, PSV, Cray,<br>mayo, Vis, Dubz, Zenge,<br>Barky, sunshine, True,<br>dolphin, shorty</div>
<div class="a cell" style="right:1074px;bottom:179.55px;transform-origin:100% 50%">4/22 8:51 PM</div>
<div class="a cell" style="left:130.8px;bottom:179.55px"><span class="red">Yeet sunny</span></div>
<div class="a cell" style="left:220.5px;bottom:179.55px">genny</div>
<div class="a cell" style="left:572.5px;bottom:179.55px"><b>Barky (5)</b> - True, Cray, shorty, Zenge, mayo; Vis (1)<br>- Barky; sunny (3) - PSV, Dubz, genny; mayo (2) -<br>Vis, speechy; Zenge (1) - dolphin</div>
<div class="a cell" style="left:845.3px;bottom:179.55px"><b>Barky (5)</b></div>
<div class="a cell" style="left:983.3px;bottom:179.55px">genny, speechy, PSV, Cray,<br>mayo, Vis, Dubz, Zenge,<br>Barky, sunshine, True,<br>dolphin, shorty</div>
<div class="a" style="left:40px;top:439px;width:89px;height:62px;border:2px solid #1a73e8"></div>
<div class="a" style="left:125.2px;top:497.2px;width:5.6px;height:5.6px;background:#1a73e8;border:0.8px solid #fff"></div>
<!-- scrollbars -->
<div class="a" style="left:1189.6px;top:230px;width:10.4px;height:525px;background:#fff"></div>
<div class="a" style="left:1189.1px;top:209px;width:1px;height:546px;background:#dadce0"></div>
<div class="a" style="left:1191.5px;top:250.6px;width:7.2px;height:22.5px;border-radius:3.6px;background:#dadce0"></div>
<div class="a" style="left:1190px;top:726px;width:10px;height:29px;background:#f8f9fa;border-top:1px solid #e8eaed"></div>
<div class="a" style="left:1190px;top:740px;width:10px;height:1px;background:#d2e3fc"></div>

<div class="a" style="left:0;top:754.5px;width:1200px;height:10.5px;background:#fff;border-top:1px solid #e2e3e3"></div>
<div class="a" style="left:0;top:754.5px;width:40px;height:10.5px;background:#f8f9fa;border-top:1px solid #e2e3e3"></div>
<div class="a" style="left:39.5px;top:754.5px;width:1px;height:10.5px;background:#e2e3e3"></div>
<div class="a" style="left:41.6px;top:755.8px;width:462.4px;height:8.4px;border-radius:4.2px;background:#dadce0"></div>
<div class="a" style="left:1160.5px;top:755px;width:29px;height:10px;background:#f8f9fa"></div><div class="a" style="left:1160px;top:755px;width:1px;height:10px;background:#e8eaed"></div>
<div class="a" style="left:1174px;top:755px;width:1px;height:10px;background:#e8eaed"></div>
<div class="a" style="left:1189px;top:755px;width:1px;height:10px;background:#e8eaed"></div>
<svg class="a" style="left:1160px;top:725px" width="40" height="40" viewBox="1160 725 40 40">
  <path d="M1192.5 735 L1195 732.5 L1197.5 735 Z" fill="#9aa0a6"/>
  <path d="M1192.5 746 L1195 748.5 L1197.5 746 Z" fill="#9aa0a6"/>
  <path d="M1166.6 760 L1169 757.6 L1169 762.4 Z" fill="#9aa0a6"/>
  <path d="M1183.4 760 L1181 757.6 L1181 762.4 Z" fill="#9aa0a6"/>
</svg>
<!-- sheet tabs bar -->
<div class="a" style="left:0;top:765px;width:1200px;height:35px;background:#f1f3f4"></div>
<div class="a" style="left:0;top:765px;width:1200px;height:1px;background:#e8eaed"></div>
<svg class="a" style="left:0;top:765px" width="1200" height="35" viewBox="0 765 1200 35">
  <path d="M49.2 777.2 V787 M44.3 782.1 H54.1" stroke="#5f6368" stroke-width="1.5"/>
  <path d="M71.3 777.6 H81.8 M71.3 780.4 H81.8 M71.3 783.2 H81.8 M71.3 786 H81.8" stroke="#5f6368" stroke-width="1.5"/>
  <g fill="#dadce0">
    <rect x="101.2" y="765" width="1" height="35"/>
    <rect x="184.6" y="765" width="1" height="35"/>
    <rect x="296.4" y="765" width="1" height="35"/>
    <rect x="410.8" y="765" width="1" height="35"/>
    <rect x="525" y="765" width="1" height="35"/>
    <rect x="639.6" y="765" width="1" height="35"/>
    <rect x="754" y="765" width="1" height="35"/>
    <rect x="1058.3" y="765" width="1" height="35"/>
    <rect x="1150" y="765" width="1" height="35"/>
  </g>
  <g fill="#5f6368">
    <path d="M163.6 780.4 H170.8 L167.2 784 Z"/>
    <path d="M275.6 780.4 H282.8 L279.2 784 Z"/>
    <path d="M504.6 780.4 H511.8 L508.2 784 Z"/>
    <path d="M618.6 780.4 H625.8 L622.2 784 Z"/>
    <path d="M733.4 780.4 H740.6 L737 784 Z"/>
  </g>
  <path d="M389.6 780.4 H396.8 L393.2 784 Z" fill="#188038"/>
  <!-- explore -->
  <path d="M1069.2 775.5 Q1069.2 774.2 1070.5 774.2 H1083.3 Q1084.6 774.2 1084.6 775.5 V788.2 Q1084.6 789.5 1083.3 789.5 H1079.6 L1076.9 792.2 L1074.2 789.5 H1070.5 Q1069.2 789.5 1069.2 788.2 Z" fill="#1f9d57"/>
  <path d="M1076.9 776.6 Q1077.8 781 1082.2 781.9 Q1077.8 782.8 1076.9 787.2 Q1076 782.8 1071.6 781.9 Q1076 781 1076.9 776.6 Z" fill="#fff"/>
  <path d="M1177.8 778.2 L1173.8 782.2 L1177.8 786.2" stroke="#444746" stroke-width="1.5" fill="none"/>
</svg>
<div class="a" style="left:296.9px;top:765px;width:114px;height:35px;background:#fff"></div>
<div class="a" style="left:1058.8px;top:765px;width:91.4px;height:35px;background:#fbfcfc"></div>
<svg class="a" style="left:296px;top:765px" width="120" height="35" viewBox="296 765 120 35">
  <path d="M389.6 780.4 H396.8 L393.2 784 Z" fill="#188038"/>
</svg>
<svg class="a" style="left:1058px;top:765px" width="92" height="35" viewBox="1058 765 92 35">
  <path d="M1069.2 775.5 Q1069.2 774.2 1070.5 774.2 H1083.3 Q1084.6 774.2 1084.6 775.5 V788.2 Q1084.6 789.5 1083.3 789.5 H1079.6 L1076.9 792.2 L1074.2 789.5 H1070.5 Q1069.2 789.5 1069.2 788.2 Z" fill="#1f9d57"/>
  <path d="M1076.9 776.6 Q1077.8 781 1082.2 781.9 Q1077.8 782.8 1076.9 787.2 Q1076 782.8 1071.6 781.9 Q1076 781 1076.9 776.6 Z" fill="#fff"/>
</svg>
<div class="a t tabt" style="left:116.5px">Roster</div>
<div class="a t tabt" style="left:200px">Day 1 Votes</div>
<div class="a t tabt" style="left:312px;color:#188038">Day 2 Votes</div>
<div class="a t tabt" style="left:426px">Day 3 Votes</div>
<div class="a t tabt" style="left:540.5px">Day 4 Votes</div>
<div class="a t tabt" style="left:655px">Day 5 Votes</div>
<div class="a t" style="left:1097.4px;top:776.8px;font-size:10.5px;line-height:13px;color:#1f9d57;-webkit-text-stroke:0.2px #1f9d57">Explore</div>

</body></html>
